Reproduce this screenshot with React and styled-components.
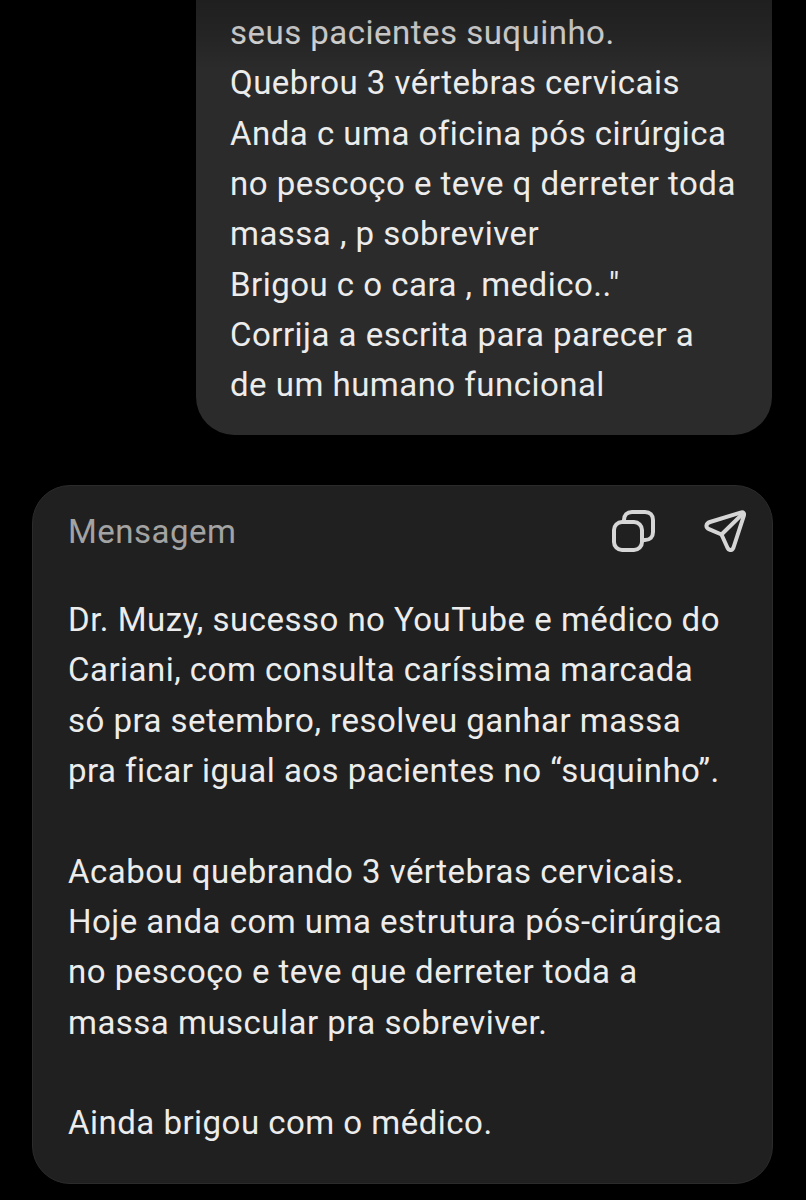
import React from "react";
import styled, { createGlobalStyle } from "styled-components";

const Global = createGlobalStyle`
  html, body { margin: 0; padding: 0; background: #000; }
  body { font-family: Roboto, "Noto Sans", sans-serif; }
`;

const Page = styled.div`
  position: relative;
  width: 806px;
  height: 1200px;
  overflow: hidden;
  background: #000;
  display: flex;
  flex-direction: column;
  align-items: flex-start;
`;

const Fade = styled.div`
  position: absolute;
  left: 0;
  top: 0;
  width: 100%;
  height: 70px;
  background: linear-gradient(to bottom, rgba(0,0,0,.28) 0%, rgba(0,0,0,.16) 50%, rgba(0,0,0,0) 100%);
`;

const Bubble = styled.div`
  margin: -17px 0 0 196px;
  width: 576px;
  box-sizing: border-box;
  height: 452px;
  padding: 25px 20px 25px 34px;
  background: #2b2b2b;
  border-radius: 0 0 38px 38px;
`;

const Line = styled.div`
  font-size: 33px;
  line-height: 50.35px;
  height: 50.35px;
  color: #ececec;
  white-space: pre;
  letter-spacing: 0.48px;
`;

const Card = styled.div`
  margin: 50px 0 0 32px;
  width: 741px;
  height: 699px;
  box-sizing: border-box;
  padding: 20px 26px 0 35px;
  background: #202020;
  border: 1px solid #2b2b2b;
  border-radius: 38px;
`;

const Header = styled.div`
  display: flex;
  align-items: center;
  height: 50px;
  margin-bottom: 39px;
`;

const Label = styled.div`
  flex: 1;
  font-size: 33px;
  letter-spacing: 0.48px;
  color: #a3a3a3;
`;

const Icons = styled.div`
  display: flex;
  align-items: center;
  gap: 49px;
`;

const Icon = styled.svg`
  display: block;
  fill: none;
  stroke: #d6d6d6;
  stroke-width: 4;
  stroke-linejoin: round;
  stroke-linecap: round;
`;

const Gap = styled.div`
  height: 50.35px;
`;

const top = [
  "seus pacientes suquinho.",
  "Quebrou 3 vértebras cervicais",
  "Anda c uma oficina pós cirúrgica",
  "no pescoço e teve q derreter toda",
  "massa , p sobreviver",
  'Brigou c o cara , medico.."',
  "Corrija a escrita para parecer a",
  "de um humano funcional",
];

const body = [
  "Dr. Muzy, sucesso no YouTube e médico do",
  "Cariani, com consulta caríssima marcada",
  "só pra setembro, resolveu ganhar massa",
  "pra ficar igual aos pacientes no “suquinho”.",
  "",
  "Acabou quebrando 3 vértebras cervicais.",
  "Hoje anda com uma estrutura pós-cirúrgica",
  "no pescoço e teve que derreter toda a",
  "massa muscular pra sobreviver.",
  "",
  "Ainda brigou com o médico.",
];

export default function App() {
  return (
    <Page>
      <Global />
      <Bubble>
        {top.map((t) => <Line key={t}>{t}</Line>)}
      </Bubble>
      <Card>
        <Header>
          <Label>Mensagem</Label>
          <Icons>
            <Icon width="43" height="42" viewBox="0 0 43 42">
              <rect x="2" y="12" width="28" height="28" rx="8" />
              <path d="M12 12V10C12 5 15 2 20 2H33C38 2 41 5 41 10V22C41 27 38 30 33 30H30" />
            </Icon>
            <Icon width="42" height="42" viewBox="0 0 42 42">
              <path d="M6 12 36.5 2.6C39.5 1.8 40.6 3 39.8 5.8L29.5 37.5C28.2 40.8 25 40.8 23.6 38L17.5 24.5 5 19.2C1 17.2 2 13.4 6 12Z" />
              <path d="M17.5 24.5 38.8 3.6" />
            </Icon>
          </Icons>
        </Header>
        {body.map((t, i) => (t ? <Line key={i}>{t}</Line> : <Gap key={i} />))}
      </Card>
      <Fade />
    </Page>
  );
}
